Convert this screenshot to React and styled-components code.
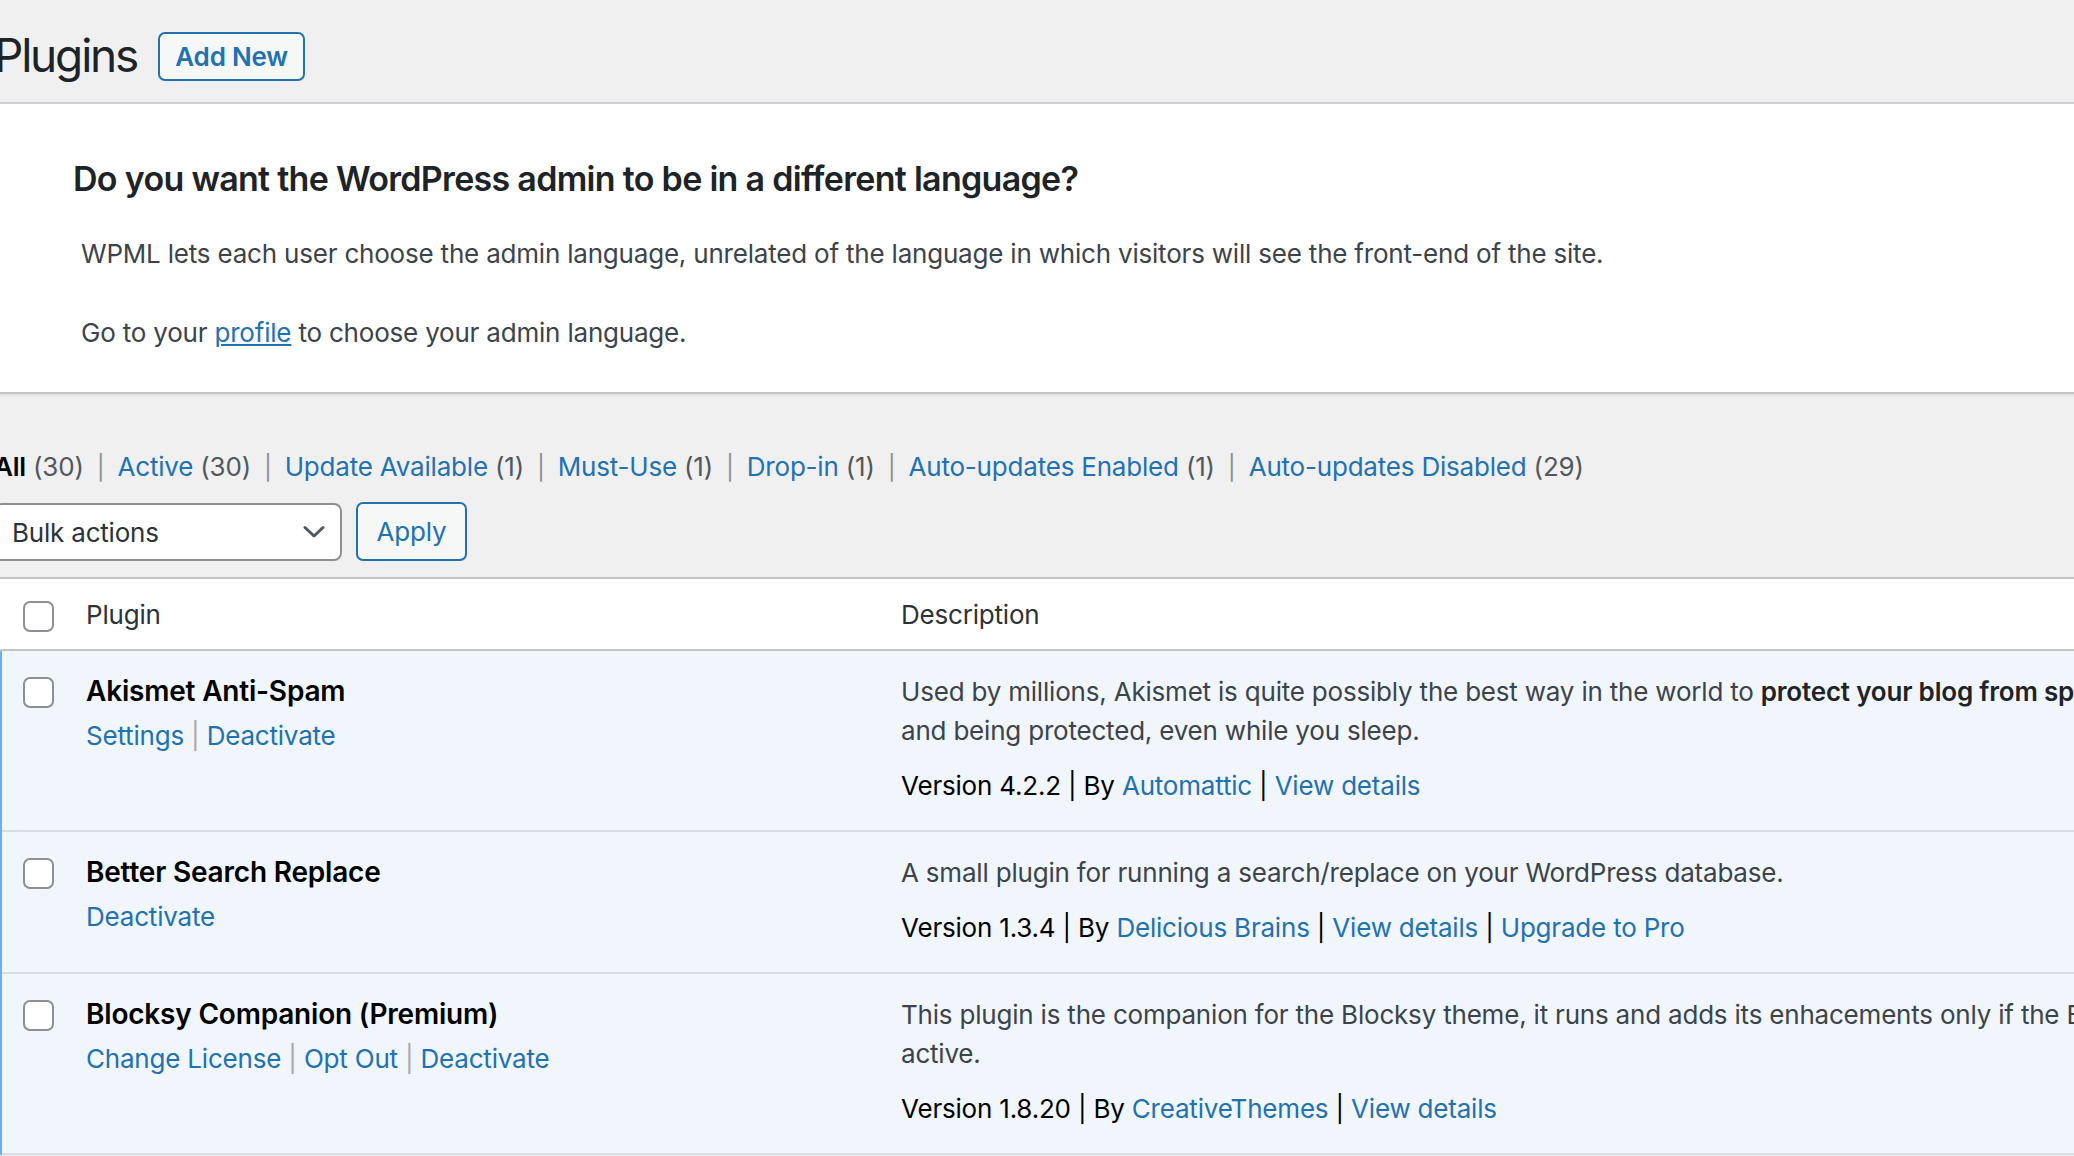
import styled, { createGlobalStyle } from "styled-components";

const GlobalStyle = createGlobalStyle`
  html, body {
    margin: 0;
    padding: 0;
  }
  body {
    width: 2074px;
    height: 1156px;
    overflow: hidden;
    background: #f0f0f1;
    font-family: Inter, "Noto Sans", sans-serif;
    font-size: 26px;
    line-height: 1.5;
    letter-spacing: -0.2px;
    color: #3c434a;
  }
  a {
    color: #2271b1;
    text-decoration: none;
  }
`;

const plugins = [
  {
    name: "Akismet Anti-Spam",
    actions: ["Settings", "Deactivate"],
    description: [
      <>
        Used by millions, Akismet is quite possibly the best way in the world to{" "}
        <strong>protect your blog from spam</strong>. Your site is fully configured
      </>,
      "and being protected, even while you sleep.",
    ],
    version: "4.2.2",
    author: "Automattic",
    links: ["View details"],
  },
  {
    name: "Better Search Replace",
    actions: ["Deactivate"],
    description: ["A small plugin for running a search/replace on your WordPress database."],
    version: "1.3.4",
    author: "Delicious Brains",
    links: ["View details", "Upgrade to Pro"],
  },
  {
    name: "Blocksy Companion (Premium)",
    actions: ["Change License", "Opt Out", "Deactivate"],
    description: [
      "This plugin is the companion for the Blocksy theme, it runs and adds its enhacements only if the Blocksy theme is installed and",
      "active.",
    ],
    version: "1.8.20",
    author: "CreativeThemes",
    links: ["View details"],
  },
];

const filters = [
  { label: "All", count: 30, current: true },
  { label: "Active", count: 30 },
  { label: "Update Available", count: 1 },
  { label: "Must-Use", count: 1 },
  { label: "Drop-in", count: 1 },
  { label: "Auto-updates Enabled", count: 1 },
  { label: "Auto-updates Disabled", count: 29 },
];

const Chevron = () => (
  <svg width="22" height="14" viewBox="0 0 22 14" fill="none">
    <path d="M2 2.5 L11 11 L20 2.5" stroke="#50575e" strokeWidth="3" strokeLinecap="round" strokeLinejoin="round" />
  </svg>
);

const App = () => {
  return (
    <>
      <GlobalStyle />
      <Wrap>
        <HeaderBar>
          <PageTitle>Plugins</PageTitle>
          <OutlineButton $w={147} $h={49} $weight={600}>
            Add New
          </OutlineButton>
        </HeaderBar>

        <Notice>
          <NoticeTitle>Do you want the WordPress admin to be in a different language?</NoticeTitle>
          <NoticeText $top={33}>
            WPML lets each user choose the admin language, unrelated of the language in which visitors will see the
            front-end of the site.
          </NoticeText>
          <NoticeText $top={40}>
            Go to your <u><a href="#">profile</a></u> to choose your admin language.
          </NoticeText>
        </Notice>

        <Filters>
          {filters.map((f, i) => (
            <li key={f.label}>
              {f.current ? <strong>{f.label}</strong> : <a href="#">{f.label}</a>}
              <Count> ({f.count})</Count>
              {i < filters.length - 1 && <Sep>|</Sep>}
            </li>
          ))}
        </Filters>

        <TableNav>
          <FakeSelect>
            <span>Bulk actions</span>
            <Chevron />
          </FakeSelect>
          <OutlineButton $w={111} $h={59} $weight={400}>
            Apply
          </OutlineButton>
        </TableNav>

        <PluginTable>
          <colgroup>
            <col style={{ width: 72 }} />
            <col style={{ width: 815 }} />
            <col />
          </colgroup>
          <thead>
            <tr>
              <CheckCell as="th" $top={22}>
                <Box />
              </CheckCell>
              <HeadCell>Plugin</HeadCell>
              <HeadCell>Description</HeadCell>
            </tr>
          </thead>
          <tbody>
            {plugins.map((p) => (
              <tr key={p.name}>
                <CheckCell $top={26} $active $row>
                  <Box />
                </CheckCell>
                <Cell $active>
                  <PluginName>{p.name}</PluginName>
                  <RowActions>
                    {p.actions.map((a, i) => (
                      <span key={a}>
                        {i > 0 && " | "}
                        <a href="#">{a}</a>
                      </span>
                    ))}
                  </RowActions>
                </Cell>
                <Cell $active>
                  <Description>
                    {p.description.map((line, i) => (
                      <span key={i}>
                        {i > 0 && <br />}
                        {line}
                      </span>
                    ))}
                  </Description>
                  <VersionLine>
                    Version {p.version} | By <a href="#">{p.author}</a>
                    {p.links.map((l) => (
                      <span key={l}>
                        {" | "}
                        <a href="#">{l}</a>
                      </span>
                    ))}
                  </VersionLine>
                </Cell>
              </tr>
            ))}
          </tbody>
        </PluginTable>
      </Wrap>
    </>
  );
};

const Wrap = styled.div`
  width: 2400px;
  margin-left: -6px;
`;

const HeaderBar = styled.div`
  display: flex;
  align-items: center;
  gap: 21px;
  height: 102px;
  box-sizing: border-box;
  padding-top: 10px;
`;

const PageTitle = styled.h1`
  margin: 0;
  font-size: 46px;
  font-weight: 400;
  line-height: 1.2;
  letter-spacing: -2.2px;
  color: #1d2327;
`;

const OutlineButton = styled.button`
  width: ${(p) => p.$w}px;
  height: ${(p) => p.$h}px;
  box-sizing: border-box;
  border: 2px solid #2271b1;
  border-radius: 7px;
  background: #f6f7f7;
  color: #2271b1;
  font-family: inherit;
  font-size: 26px;
  font-weight: ${(p) => p.$weight};
  letter-spacing: -0.2px;
  padding: 0;
  cursor: pointer;
`;

const Notice = styled.div`
  background: #fff;
  border-top: 2px solid #cdd0d4;
  border-bottom: 2px solid #c3c4c7;
  box-shadow: 0 2px 2px rgba(0, 0, 0, 0.06);
  padding-bottom: 40px;
`;

const NoticeTitle = styled.h2`
  margin: 0;
  padding: 53px 0 0 79px;
  font-size: 34px;
  font-weight: 600;
  line-height: 44px;
  letter-spacing: -0.7px;
  color: #1d2327;
`;

const NoticeText = styled.p`
  margin: ${(p) => p.$top}px 0 0;
  padding-left: 87px;
  line-height: 39px;
  color: #3c434a;

  u {
    text-decoration-color: #2271b1;
  }
`;

const Filters = styled.ul`
  list-style: none;
  margin: 53px 0 0;
  padding: 0;
  display: flex;
  line-height: 39px;
  color: #50575e;

  strong {
    font-weight: 600;
    color: #000;
  }
`;

const Count = styled.span`
  color: #50575e;
`;

const Sep = styled.span`
  display: inline-block;
  margin: 0 13px;
  font-size: 24px;
  color: #8c8f94;
`;

const TableNav = styled.div`
  display: flex;
  align-items: flex-start;
  gap: 14px;
  margin-top: 15px;
`;

const FakeSelect = styled.div`
  width: 348px;
  height: 58px;
  margin-top: 1px;
  box-sizing: border-box;
  display: flex;
  align-items: center;
  justify-content: space-between;
  padding: 0 15px 0 16px;
  background: #fff;
  border: 2px solid #8c8f94;
  border-radius: 8px;
  color: #2c3338;
`;

const PluginTable = styled.table`
  margin-top: 16px;
  width: 2406px;
  table-layout: fixed;
  border-collapse: separate;
  border-spacing: 0;
  background: #fff;
  border-top: 2px solid #c3c4c7;
`;

const HeadCell = styled.th`
  padding: 16px 20px 15px;
  text-align: left;
  font-weight: 400;
  line-height: 39px;
  color: #2c3338;
  border-bottom: 2px solid #c3c4c7;
  vertical-align: top;
`;

const CheckCell = styled.td`
  box-sizing: border-box;
  vertical-align: top;
  padding: ${(p) => p.$top}px 0 0 21px;
  border-left: 8px solid ${(p) => (p.$active ? "#72aee6" : "transparent")};
  border-bottom: ${(p) => (p.$row ? "none" : "2px solid #c3c4c7")};
  background: ${(p) => (p.$active ? "#f0f6fc" : "#fff")};
  box-shadow: ${(p) => (p.$row ? "inset 0 -2px 0 rgba(0, 0, 0, 0.1)" : "none")};
`;

const Box = styled.span`
  display: block;
  width: 31px;
  height: 31px;
  box-sizing: border-box;
  border: 2px solid #8c8f94;
  border-radius: 7px;
  background: #fff;
`;

const Cell = styled.td`
  vertical-align: top;
  padding: 21px 20px 27px;
  line-height: 39px;
  background: ${(p) => (p.$active ? "#f0f6fc" : "#fff")};
  box-shadow: inset 0 -2px 0 rgba(0, 0, 0, 0.1);
  white-space: nowrap;
`;

const PluginName = styled.strong`
  display: block;
  font-size: 28px;
  font-weight: 600;
  color: #000;
`;

const RowActions = styled.div`
  margin-top: 5px;
  color: #a7aaad;
`;

const Description = styled.div`
  color: #3c434a;

  strong {
    font-weight: 600;
    color: #1d2327;
  }
`;

const VersionLine = styled.div`
  margin-top: 16px;
  color: #000;
`;

export default App;
